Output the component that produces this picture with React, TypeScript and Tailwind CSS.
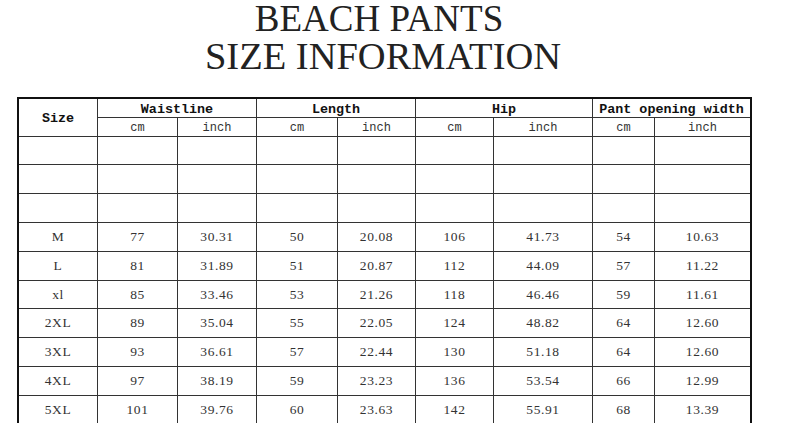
import React from "react";

const rows: string[][] = [
  ["", "", "", "", "", "", "", "", ""],
  ["", "", "", "", "", "", "", "", ""],
  ["", "", "", "", "", "", "", "", ""],
  ["M", "77", "30.31", "50", "20.08", "106", "41.73", "54", "10.63"],
  ["L", "81", "31.89", "51", "20.87", "112", "44.09", "57", "11.22"],
  ["xl", "85", "33.46", "53", "21.26", "118", "46.46", "59", "11.61"],
  ["2XL", "89", "35.04", "55", "22.05", "124", "48.82", "64", "12.60"],
  ["3XL", "93", "36.61", "57", "22.44", "130", "51.18", "64", "12.60"],
  ["4XL", "97", "38.19", "59", "23.23", "136", "53.54", "66", "12.99"],
  ["5XL", "101", "39.76", "60", "23.63", "142", "55.91", "68", "13.39"],
];

const head = "bg-white flex items-center justify-center font-['Liberation_Mono',monospace] font-bold text-[13.4px] leading-[16px] text-[#111] pt-[3px]";
const sub = "bg-white flex items-center justify-center font-['Liberation_Mono',monospace] text-[12px] leading-[14px] text-[#333] pt-[2px]";
const cell = "bg-white flex items-center justify-center font-['Liberation_Serif',serif] text-[13.5px] tracking-[0.6px] text-[#333] pt-px";

export default function App() {
  return (
    <div className="w-[800px] h-[423px] overflow-hidden bg-white">
      <div className="font-['Liberation_Serif','Times_New_Roman',serif] text-[#222]">
        <div className="w-[758px] text-center text-[37px] leading-[37px]">BEACH PANTS</div>
        <div className="w-[766px] text-center text-[38.5px] leading-[38px]">SIZE INFORMATION</div>
      </div>
      <div className="ml-[17px] mt-[22px] w-[735px] border-2 border-[#111] bg-[#333] grid gap-px grid-cols-[78px_79px_78px_80px_77px_77px_98px_61px_95px] grid-rows-[18px_18px_27px_28px_28px_28px_28px_27px_28px_28px_28px_28px]">
        <div className={`${head} row-span-2`}>Size</div>
        <div className={`${head} col-span-2`}>Waistline</div>
        <div className={`${head} col-span-2`}>Length</div>
        <div className={`${head} col-span-2`}>Hip</div>
        <div className={`${head} col-span-2`}>Pant opening width</div>
        <div className={sub}>cm</div>
        <div className={sub}>inch</div>
        <div className={sub}>cm</div>
        <div className={sub}>inch</div>
        <div className={sub}>cm</div>
        <div className={sub}>inch</div>
        <div className={sub}>cm</div>
        <div className={sub}>inch</div>
        {rows.map((r, i) =>
          r.map((v, j) => (
            <div key={`${i}-${j}`} className={cell}>
              {v}
            </div>
          ))
        )}
      </div>
    </div>
  );
}
